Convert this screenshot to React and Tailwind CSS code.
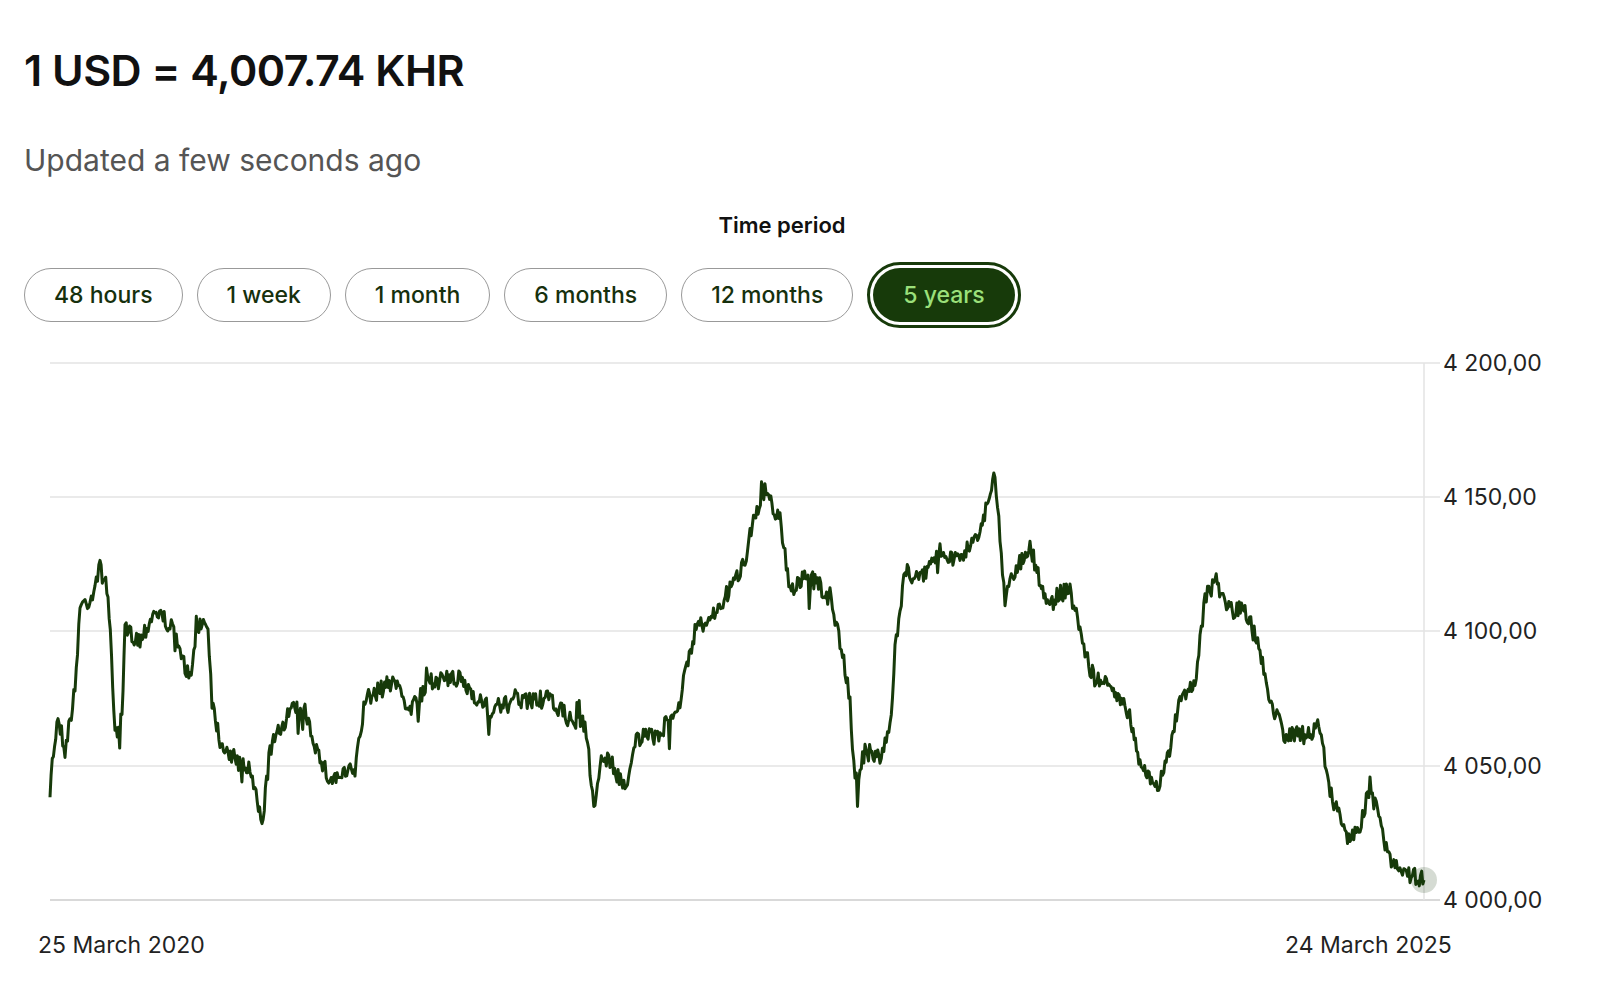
import React from "react";

const K = [[50,780],[58,715],[65,750],[75,690],[80,605],[90,600],[100,568],[108,590],[115,735],[122,720],[125,630],[140,640],[155,610],[170,625],[180,650],[190,680],[200,620],[208,625],[212,700],[220,740],[235,760],[250,770],[262,825],[270,750],[290,710],[305,710],[320,760],[330,780],[355,770],[365,700],[380,690],[395,680],[410,710],[430,680],[460,680],[490,710],[520,700],[550,700],[570,720],[585,725],[595,810],[600,760],[610,760],[625,790],[635,740],[660,735],[680,700],[695,630],[710,620],[730,590],[745,560],[750,530],[765,490],[780,520],[790,590],[800,580],[815,580],[830,600],[840,640],[850,700],[855,785],[865,750],[880,760],[890,730],[895,650],[905,570],[920,580],[940,550],[960,560],[980,530],[995,475],[1005,600],[1015,570],[1030,545],[1045,600],[1070,590],[1080,630],[1090,670],[1110,690],[1125,700],[1140,760],[1155,790],[1165,770],[1180,700],[1195,680],[1205,600],[1215,580],[1230,610],[1245,610],[1260,650],[1270,700],[1285,735],[1305,735],[1320,730],[1330,790],[1340,820],[1350,840],[1360,830],[1370,785],[1380,825],[1390,860],[1400,865],[1410,875],[1424,880]];

function buildPath() {
  let seed = 7;
  const rnd = () => { seed = (seed * 16807) % 2147483647; return seed / 2147483647; };
  const pts = [];
  for (let i = 0; i < K.length - 1; i++) {
    const [x0, y0] = K[i], [x1, y1] = K[i + 1];
    const n = Math.max(1, Math.round((x1 - x0) / 1.2));
    for (let j = 0; j < n; j++) {
      const t = j / n;
      const spike = rnd() < 0.02 ? (rnd() - 0.5) * 50 : 0;
      const y = y0 + (y1 - y0) * t + (rnd() - 0.5) * 18 + spike;
      pts.push([x0 + (x1 - x0) * t, y]);
    }
  }
  pts.push(K[K.length - 1]);
  return "M" + pts.map(p => p[0].toFixed(1) + " " + p[1].toFixed(1)).join(" L");
}
const D = buildPath();

const btns = ["48 hours", "1 week", "1 month", "6 months", "12 months"];
const grid = [[363, "4 200,00"], [497, "4 150,00"], [631, "4 100,00"], [766, "4 050,00"], [900, "4 000,00"]];

export default function App() {
  return (
    <div className="w-[1600px] h-[997px] bg-white text-[#111] overflow-hidden" style={{ fontFamily: "Inter, 'Noto Sans', sans-serif" }}>
      <div className="pl-6 pt-[44px]">
        <h1 className="text-[43px] font-semibold tracking-[-0.5px] leading-[52px]">1 USD = 4,007.74 KHR</h1>
        <p className="mt-[46px] text-[30px] text-[#555] leading-[36px]">Updated a few seconds ago</p>
      </div>
      <div className="mt-[33px] text-center w-[1564px] text-[22px] font-semibold leading-[28px]">Time period</div>
      <div className="flex items-center gap-[14px] pl-6 mt-[23px]">
        {btns.map(b => (
          <div key={b} className="h-[54px] px-[29px] rounded-full border border-[#999] flex items-center text-[23px] font-medium text-[#16300d]">{b}</div>
        ))}
        <div className="h-[66px] p-[3px] rounded-full border-[3px] border-[#173a0a]">
          <div className="h-full px-[30px] rounded-full bg-[#173a0a] flex items-center text-[23px] font-medium text-[#9be07a]">5 years</div>
        </div>
      </div>
      <svg width="1600" height="660" viewBox="0 340 1600 660" className="block mt-[12px]">
        {grid.map(([y, l]) => (
          <g key={y}>
            <line x1="50" x2="1440" y1={y} y2={y} stroke={y === 900 ? "#ccc" : "#e3e3e3"} strokeWidth="1.5" />
            <text x="1443" y={y + 8} fontSize="23" fill="#222" fontFamily="Inter, sans-serif">{l}</text>
          </g>
        ))}
        <line x1="1424" x2="1424" y1="363" y2="900" stroke="#e3e3e3" strokeWidth="1.5" />
        <path d={D} fill="none" stroke="#173a0a" strokeWidth="3" strokeLinejoin="round" />
        <circle cx="1424" cy="880" r="13" fill="#173a0a" fillOpacity="0.18" />
        <text x="38" y="953" fontSize="23" fill="#222" fontFamily="Inter, sans-serif">25 March 2020</text>
        <text x="1285" y="953" fontSize="23" fill="#222" fontFamily="Inter, sans-serif">24 March 2025</text>
      </svg>
    </div>
  );
}
